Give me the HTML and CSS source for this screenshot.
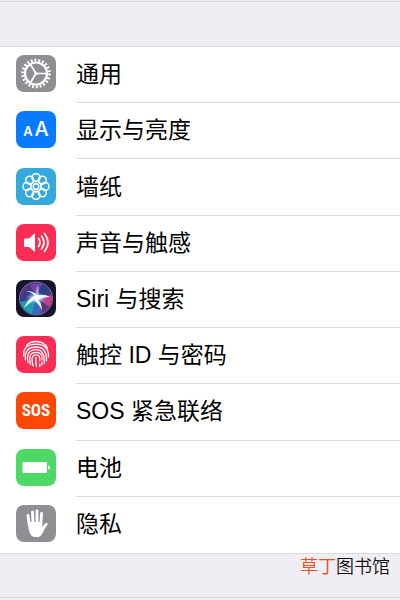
FILE: index.html
```html
<!DOCTYPE html>
<html lang="zh-CN">
<head>
    <meta charset="UTF-8">
    <meta name="viewport" content="width=device-width, initial-scale=1.0">
    <title>设置</title>
    <link rel="stylesheet" href="styles.css">
</head>
<body>
    <main class="settings">
        <ul class="settings-list">
            <li class="item">
                <svg class="icon icon-gray" viewBox="0 0 40 37" aria-hidden="true">
                    <g fill="none" stroke="#fff">
                        <circle cx="20" cy="18.500" r="13.300" stroke-width="3" stroke-dasharray="1.900 1.898"/>
                        <circle cx="20" cy="18.500" r="11" stroke-width="2.200"/>
                        <path d="M20 18.500H30M20 18.500L14.500 9.500M20 18.500L14.500 27.500" stroke-width="1.700"/>
                    </g>
                    <circle cx="20" cy="18.500" r="1.700" fill="#fff"/>
                </svg>
                <a class="label" href="#general">通用</a>
            </li>
            <li class="item">
                <svg class="icon icon-blue" viewBox="0 0 40 37" aria-hidden="true">
                    <text class="small-a" x="12" y="25" text-anchor="middle">A</text>
                    <text class="big-a" x="25.500" y="25" text-anchor="middle">A</text>
                </svg>
                <a class="label" href="#display">显示与亮度</a>
            </li>
            <li class="item">
                <svg class="icon icon-cyan" viewBox="0 0 40 37" aria-hidden="true">
                    <g fill="none" stroke="#fff" stroke-width="1.500">
                        <circle cx="20" cy="9.700" r="4"/>
                        <circle cx="26.300" cy="12.200" r="4"/>
                        <circle cx="29" cy="18.500" r="4"/>
                        <circle cx="26.300" cy="24.800" r="4"/>
                        <circle cx="20" cy="27.300" r="4"/>
                        <circle cx="13.700" cy="24.800" r="4"/>
                        <circle cx="11" cy="18.500" r="4"/>
                        <circle cx="13.700" cy="12.200" r="4"/>
                        <circle cx="20" cy="18.500" r="2.800"/>
                        <circle cx="20" cy="18.500" r="5.400"/>
                    </g>
                </svg>
                <a class="label" href="#wallpaper">墙纸</a>
            </li>
            <li class="item">
                <svg class="icon icon-red" viewBox="0 0 40 37" aria-hidden="true">
                    <path d="M9 14.500h4l6-5.500v19L13 23H9q-1 0-1-1v-6.500q0-1 1-1z" fill="#fff"/>
                    <g fill="none" stroke="#fff" stroke-width="1.700" stroke-linecap="round">
                        <path d="M22.500 14.500q3 4 0 8"/>
                        <path d="M25.500 12q5 6.500 0 13"/>
                        <path d="M28.500 9.500q7 9 0 18"/>
                    </g>
                </svg>
                <a class="label" href="#sounds">声音与触感</a>
            </li>
            <li class="item">
                <svg class="icon icon-siri" viewBox="0 0 40 37" aria-hidden="true">
                    <defs>
                        <linearGradient id="orb" x1="0" y1="0.200" x2="1" y2="0.800">
                            <stop offset="0" stop-color="#6d3590"/>
                            <stop offset="0.300" stop-color="#34377f"/>
                            <stop offset="0.600" stop-color="#254585"/>
                            <stop offset="1" stop-color="#8c2a70"/>
                        </linearGradient>
                        <radialGradient id="glow">
                            <stop offset="0" stop-color="#fff"/>
                            <stop offset="0.350" stop-color="#b9e8ff" stop-opacity="0.800"/>
                            <stop offset="1" stop-color="#6cc8ff" stop-opacity="0"/>
                        </radialGradient>
                    </defs>
                    <circle cx="20" cy="18.500" r="16.500" fill="url(#orb)" stroke="#777597" stroke-width="1"/>
                    <path d="M20 18L4 22Q7 31 16 34z" fill="#16b9bd" opacity="0.800"/>
                    <path d="M20 18L16 34Q22 35 26 33z" fill="#3e79db" opacity="0.700"/>
                    <path d="M20 18L14 5Q20 2 26 4z" fill="#9c4bc8" opacity="0.600"/>
                    <path d="M21 18L36 15Q36 22 33 27z" fill="#ef3f91" opacity="0.700"/>
                    <ellipse cx="20" cy="18" rx="11" ry="6" fill="url(#glow)"/>
                    <g fill="#fff" opacity="0.900">
                        <path d="M21 19Q17 12 10 11Q18 10 24 18z"/>
                        <path d="M20 20Q19 9 22 5Q23 12 23 18z" opacity="0.500"/>
                        <path d="M20 16Q28 13 34 17Q27 17 22 20z"/>
                        <path d="M20 18Q26 21 26 31Q23 24 18 20z"/>
                        <path d="M22 17Q16 21 8 28Q11 20 18 16z"/>
                    </g>
                </svg>
                <a class="label" href="#siri">Siri 与搜索</a>
            </li>
            <li class="item">
                <svg class="icon icon-red" viewBox="0 0 40 37" aria-hidden="true">
                    <g fill="none" stroke="#fff" stroke-width="1.300" stroke-linecap="round">
                        <path d="M10.500 9.500Q14 5.500 20 5.500Q28 5.500 31.500 12"/>
                        <path d="M7.800 20Q6.500 8.500 20 8.200Q33 8.500 32.500 21"/>
                        <path d="M9.500 24Q8 11 20 11Q31 11 30.500 25"/>
                        <path d="M12 26.500Q9.500 13.700 20 13.700Q29 13.700 28.300 27.500"/>
                        <path d="M14.500 28.500Q11.500 16.300 20 16.300Q27 16.300 26 24"/>
                        <path d="M17.200 30Q14 18.800 20 18.800Q24.500 18.800 23.700 25"/>
                        <path d="M20 21.500Q19.500 26 20.500 30.500M23.800 28V30.500M26 26.500V29"/>
                    </g>
                </svg>
                <a class="label" href="#touchid">触控 ID 与密码</a>
            </li>
            <li class="item">
                <svg class="icon icon-orange" viewBox="0 0 40 37" aria-hidden="true">
                    <text class="sos" x="20" y="24" text-anchor="middle">SOS</text>
                </svg>
                <a class="label" href="#sos">SOS 紧急联络</a>
            </li>
            <li class="item">
                <svg class="icon icon-green" viewBox="0 0 40 37" aria-hidden="true">
                    <rect x="6.500" y="13" width="24.500" height="11" rx="1" fill="#fff"/>
                    <path d="M32 16.500q2 0 2 2t-2 2z" fill="#fff"/>
                </svg>
                <a class="label" href="#battery">电池</a>
            </li>
            <li class="item">
                <svg class="icon icon-gray" viewBox="0 0 40 37" aria-hidden="true">
                    <g fill="none" stroke="#fff" stroke-width="2.900" stroke-linecap="round">
                        <path d="M13.200 20L12 10.500"/>
                        <path d="M17 18L16.500 7"/>
                        <path d="M21 18V6"/>
                        <path d="M24.800 19L25.600 8.500"/>
                    </g>
                    <path d="M11.800 17H26.200V22L29 18.500Q31 17.300 32 18.500L28 25Q25.500 31.500 22.500 32H17.500Q13.500 30 12.700 24z" fill="#fff"/>
                </svg>
                <a class="label" href="#privacy">隐私</a>
            </li>
        </ul>
    </main>
    <div class="watermark"><span class="watermark-red">草丁</span>图书馆</div>
</body>
</html>
```

FILE: styles.css
```css
* {
    box-sizing: border-box;
}
body {
    margin: 0;
    background-color: #efeef4;
    color: #000;
    font-family: "Liberation Sans", "Noto Sans CJK SC", sans-serif;
}
.settings {
    display: flex;
    flex-direction: column;
    min-height: 100vh;
    padding: 46px 0;
    background: linear-gradient(#d9d9de, #d9d9de) 0 1px / 100% 1px no-repeat,
                linear-gradient(#d9d9de, #d9d9de) 0 calc(100% - 2px) / 100% 1px no-repeat;
}
.settings-list {
    flex: 1;
    display: flex;
    flex-direction: column;
    margin: 0;
    padding: 0;
    list-style: none;
    background-color: #fff;
    border-top: 1px solid #dddde1;
    border-bottom: 1px solid #d9d9de;
}
.item {
    flex: 1;
    display: flex;
    align-items: center;
    gap: 20px;
    min-height: 56px;
    padding-left: 16px;
}
.icon {
    flex: none;
    width: 40px;
    height: 37px;
    margin-bottom: 3px;
    border-radius: 8px;
}
.icon-gray {
    background-color: #8e8e93;
}
.icon-blue {
    background-color: #0a7aff;
}
.icon-cyan {
    background-color: #35a8dc;
}
.icon-red {
    background-color: #fc2d55;
}
.icon-siri {
    background-color: #17152e;
}
.icon-orange {
    background-color: #fd4703;
}
.icon-green {
    background-color: #4cd964;
}
.label {
    flex: 1;
    align-self: stretch;
    display: flex;
    align-items: center;
    padding-bottom: 1px;
    border-bottom: 1px solid #dcdcdf;
    color: inherit;
    font-size: 23px;
    line-height: 32px;
    text-decoration: none;
    white-space: pre;
}
.item:last-child .label {
    border-bottom: none;
}
.small-a,
.big-a {
    fill: #fff;
    font-family: Inter, sans-serif;
    font-weight: 600;
    font-size: 13px;
}
.big-a {
    font-size: 20px;
    font-weight: 500;
}
.sos {
    fill: #fff;
    font-family: "Liberation Sans Narrow", "Roboto Condensed", Roboto, sans-serif;
    font-size: 17px;
    font-weight: 700;
}
.watermark {
    position: absolute;
    right: 10px;
    bottom: 22px;
    color: #111;
    font-family: "Noto Sans CJK SC", sans-serif;
    font-size: 18px;
    font-weight: 350;
    line-height: 26px;
}
.watermark-red {
    color: #e9501e;
}
```
